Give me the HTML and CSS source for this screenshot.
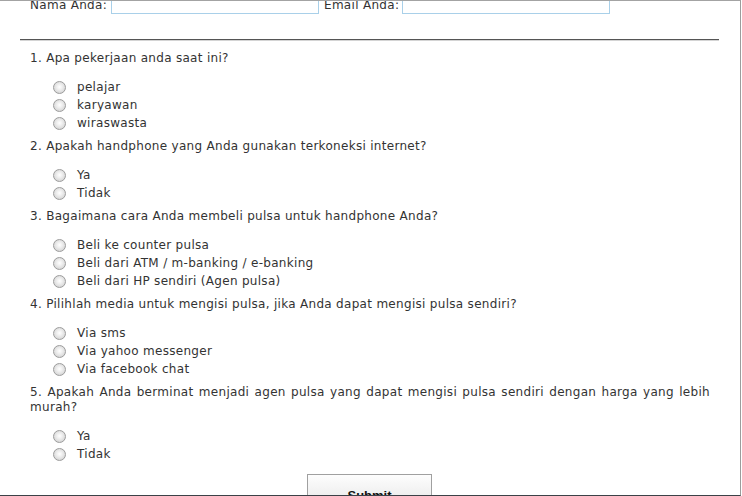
FILE: index.html
```html
<!DOCTYPE html>
<html lang="id">

<head>
    <meta charset="UTF-8" />
    <meta name="viewport" content="width=device-width, initial-scale=1.0" />
    <title>Survey Pulsa</title>
    <link rel="stylesheet" href="styles.css">
</head>

<body>
    <div class="page">
        <form class="survey">
            <!-- data diri -->
            <div class="identity">
                <label class="lbl-nama" for="nama">Nama Anda:</label>
                <input class="field" type="text" id="nama" />
                <label class="lbl-email" for="email">Email Anda:</label>
                <input class="field" type="text" id="email" />
            </div>

            <hr class="divider" />

            <div class="question">
                <p>1. Apa pekerjaan anda saat ini?</p>
                <ul class="options">
                    <li><label><input type="radio" name="q1" /> pelajar</label></li>
                    <li><label><input type="radio" name="q1" /> karyawan</label></li>
                    <li><label><input type="radio" name="q1" /> wiraswasta</label></li>
                </ul>
            </div>

            <div class="question">
                <p>2. Apakah handphone yang Anda gunakan terkoneksi internet?</p>
                <ul class="options">
                    <li><label><input type="radio" name="q2" /> Ya</label></li>
                    <li><label><input type="radio" name="q2" /> Tidak</label></li>
                </ul>
            </div>

            <div class="question">
                <p>3. Bagaimana cara Anda membeli pulsa untuk handphone Anda?</p>
                <ul class="options">
                    <li><label><input type="radio" name="q3" /> Beli ke counter pulsa</label></li>
                    <li><label><input type="radio" name="q3" /> Beli dari ATM / m-banking / e-banking</label></li>
                    <li><label><input type="radio" name="q3" /> Beli dari HP sendiri (Agen pulsa)</label></li>
                </ul>
            </div>

            <div class="question">
                <p>4. Pilihlah media untuk mengisi pulsa, jika Anda dapat mengisi pulsa sendiri?</p>
                <ul class="options">
                    <li><label><input type="radio" name="q4" /> Via sms</label></li>
                    <li><label><input type="radio" name="q4" /> Via yahoo messenger</label></li>
                    <li><label><input type="radio" name="q4" /> Via facebook chat</label></li>
                </ul>
            </div>

            <div class="question">
                <p>5. Apakah Anda berminat menjadi agen pulsa yang dapat mengisi pulsa sendiri dengan harga yang lebih murah?</p>
                <ul class="options">
                    <li><label><input type="radio" name="q5" /> Ya</label></li>
                    <li><label><input type="radio" name="q5" /> Tidak</label></li>
                </ul>
            </div>

            <div class="actions">
                <button class="submit" type="button">Submit</button>
            </div>
        </form>
    </div>
</body>

</html>
```
FILE: styles.css
```css
* {
    margin: 0;
    padding: 0;
}

body {
    background: #fff;
    font-family: "DejaVu Sans", Verdana, sans-serif;
    font-size: 12px;
    letter-spacing: 0.3px;
    color: #333;
}

ul {
    list-style: none;
}

.page {
    width: 741px;
    height: 496px;
    box-sizing: border-box;
    border-top: 1px solid #a3a3a3;
    border-right: 1px solid #9c9c9c;
    border-bottom: 1px solid #3b4147;
    overflow: hidden;
}

.survey {
    padding: 0 21px 0 20px;
}

/* 
    baris nama dan email
*/
.identity {
    display: flex;
    align-items: center;
    margin-top: -5px;
    padding-left: 10px;
    line-height: 15px;
}

.lbl-nama {
    width: 81px;
}

.lbl-email {
    width: 78px;
    margin-left: 5px;
}

.field {
    width: 208px;
    height: 18px;
    box-sizing: border-box;
    border: 1px solid #a9d0e9;
    outline: none;
}

.divider {
    margin: 25px 0 10px;
    height: 0;
    border: 0;
    border-top: 1px solid #555;
    border-bottom: 1px solid #d4d4d4;
}

/* 
    pertanyaan
*/
.question {
    padding: 0 9px 0 10px;
    margin-bottom: 7px;
}

.question p {
    line-height: 15px;
    text-align: justify;
    margin-bottom: 12px;
}

.options {
    padding-left: 23px;
}

.options li {
    height: 18px;
    line-height: 18px;
}

.options label {
    display: flex;
    align-items: center;
}

.options input {
    appearance: none;
    width: 13px;
    height: 13px;
    margin-right: 11px;
    border: 1px solid #9c9c9c;
    border-radius: 50%;
    box-sizing: border-box;
    background: radial-gradient(circle at 50% 45%, #fff 0, #eee 35%, #c8c8c8 100%);
}

.actions {
    display: flex;
    justify-content: center;
    margin-top: 11px;
}

.submit {
    width: 125px;
    height: 36px;
    border: 1px solid #a0a0a0;
    background: linear-gradient(#fdfdfd, #e6e6e6);
    font-family: "Liberation Sans", Arial, sans-serif;
    font-weight: bold;
    font-size: 13px;
    letter-spacing: 0;
    color: #111;
    padding-top: 6px;
}
```
